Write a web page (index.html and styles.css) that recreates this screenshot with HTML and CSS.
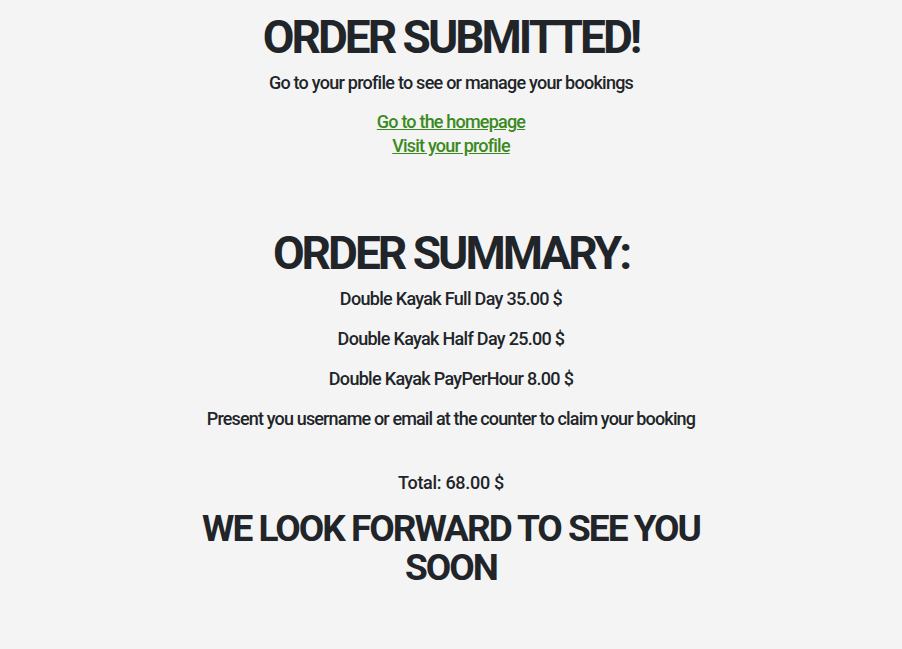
FILE: index.html
```html
<!DOCTYPE html>
<html lang="en">
<head>
<meta charset="utf-8">
<title>Order submitted</title>
<link rel="stylesheet" href="styles.css">
</head>
<body>
<main class="page">
  <section class="submitted">
    <h1 class="title">ORDER SUBMITTED!</h1>
    <p class="lead">Go to your profile to see or manage your bookings</p>
    <div class="links">
      <a href="#" class="link">Go to the homepage</a>
      <a href="#" class="link">Visit your profile</a>
    </div>
  </section>
  <section class="summary">
    <h2 class="title summary-title">ORDER SUMMARY:</h2>
    <p class="item">Double Kayak Full Day 35.00 $</p>
    <p class="item">Double Kayak Half Day 25.00 $</p>
    <p class="item">Double Kayak PayPerHour 8.00 $</p>
    <p class="item wide">Present you username or email at the counter to claim your booking</p>
    <p class="total">Total: 68.00 $</p>
    <h3 class="closing">WE LOOK FORWARD TO SEE YOU SOON</h3>
  </section>
</main>
</body>
</html>
```
FILE: styles.css
```css
html, body {
  margin: 0;
  padding: 0;
}
body {
  background: #f4f4f4;
  color: #212529;
  font-family: Roboto, "Liberation Sans", sans-serif;
  font-weight: 500;
}
.page {
  width: 540px;
  margin: 0 auto;
  text-align: center;
}
.submitted {
  padding-top: 8px;
}
.title {
  margin: 0;
  font-size: 46px;
  line-height: 58px;
  font-weight: 700;
  letter-spacing: -3px;
}
.lead {
  margin: 2px 0 0;
  font-size: 18px;
  line-height: 30px;
  letter-spacing: -0.75px;
}
.links {
  display: flex;
  flex-direction: column;
  align-items: center;
  margin-top: 12px;
}
.link {
  color: #3a8a1e;
  font-size: 18px;
  line-height: 24px;
  letter-spacing: -0.8px;
  text-decoration: underline;
}
.summary {
  margin-top: 66px;
}
.summary-title {
  margin-bottom: 5px;
}
.item {
  margin: 0 0 16px;
  font-size: 18px;
  line-height: 24px;
  letter-spacing: -0.7px;
}
.wide {
  letter-spacing: -0.85px;
}
.total {
  margin: 40px 0 0;
  font-size: 18px;
  line-height: 24px;
  letter-spacing: -0.3px;
}
.closing {
  margin: 14px 0 0;
  font-size: 37px;
  line-height: 39px;
  font-weight: 700;
  letter-spacing: -2px;
}
```
